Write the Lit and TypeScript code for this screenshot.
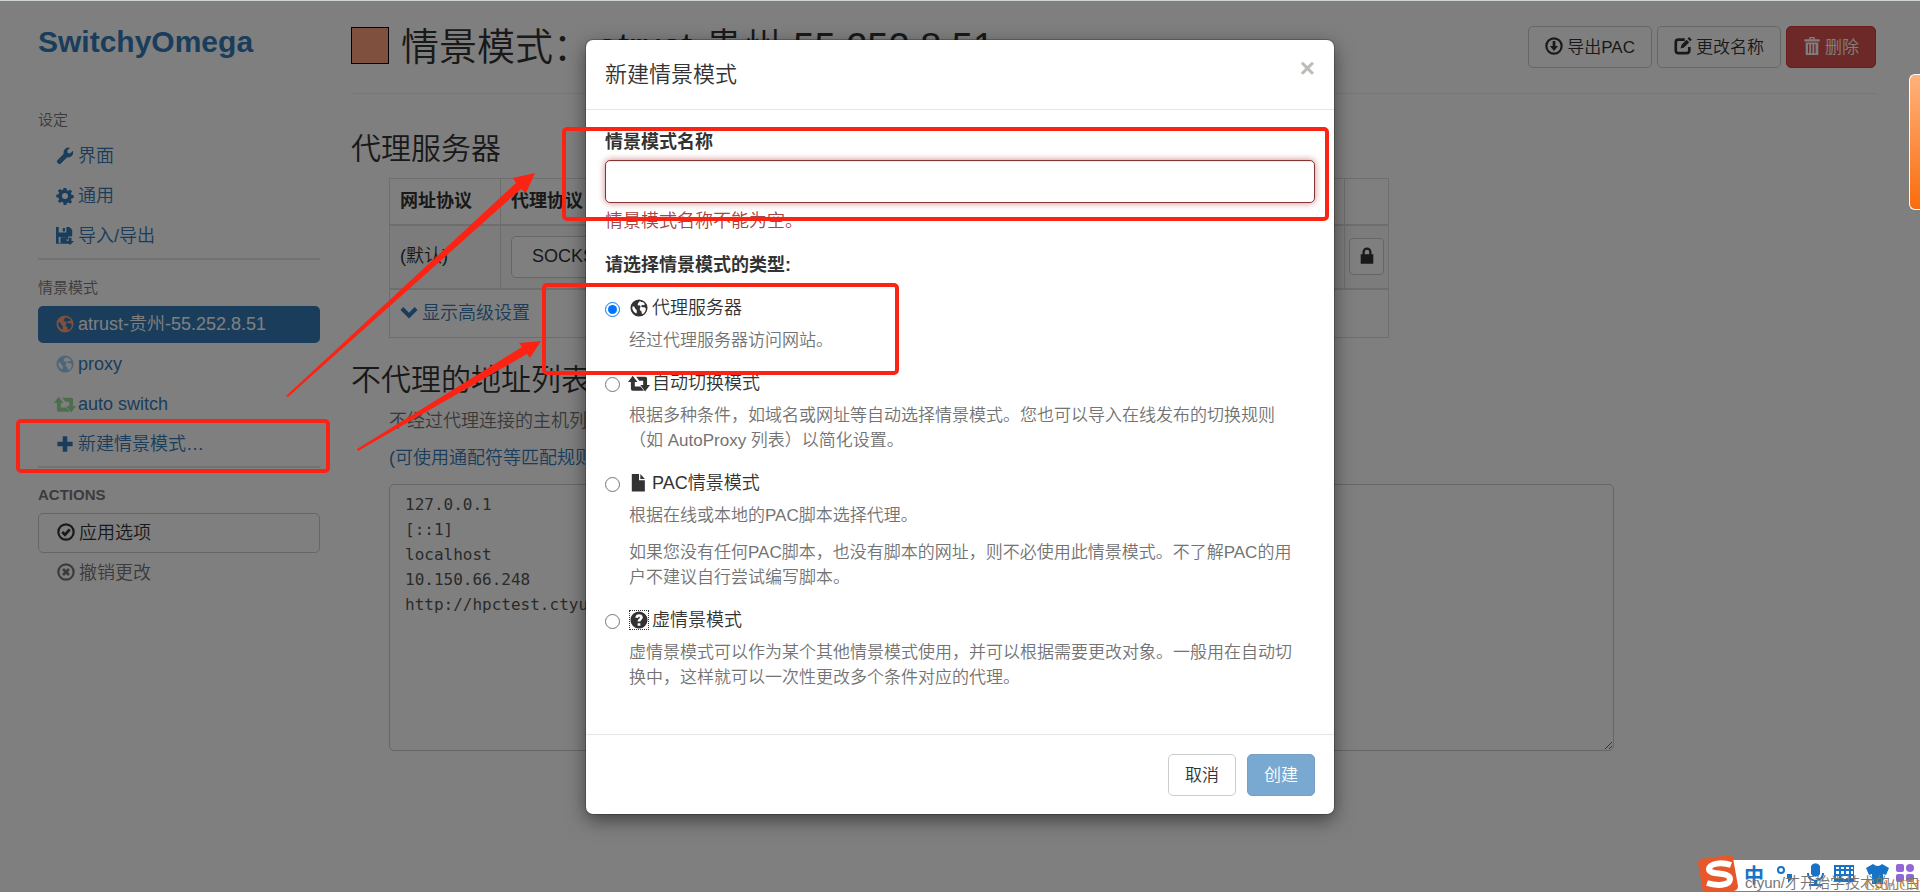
import { LitElement, html, css, svg } from "lit";
import { customElement, state } from "lit/decorators.js";

const glyphs: Record<string, unknown> = {
  wrench: svg`<path d="M18.700 4.200 15.600 7.200 13 6.600 12.500 4 15.500 1A5.400 5.400 0 0 0 8.600 7.600L1.600 14.600a2 2 0 0 0 0 2.800l1 1a2 2 0 0 0 2.800 0L12.400 11.400A5.400 5.400 0 0 0 18.700 4.200z"/>`,
  cog: svg`<path fill-rule="evenodd" d="M8.500 1h3l.5 2.500 1.700.7 2.100-1.400 2.100 2.100-1.400 2.100.7 1.700 2.500.5v3l-2.500.5-.7 1.700 1.400 2.100-2.100 2.100-2.100-1.400-1.700.7-.5 2.500h-3L8 17.200l-1.700-.7-2.100 1.400-2.100-2.100 1.400-2.100L2.800 12 .3 11.500v-3L2.800 8l.7-1.700-1.400-2.100 2.100-2.100 2.100 1.400L8 2.800zM10 6.700a3.300 3.300 0 1 0 0 6.600 3.300 3.300 0 0 0 0-6.600z"/>`,
  globe: svg`<path fill-rule="evenodd" d="M10 .5a9.500 9.500 0 1 0 0 19 9.500 9.500 0 0 0 0-19zM11 2.300l1.500.9 2.200.3 1.800 2-.8 1.500-2.200-.4-1.300 1.200 1.500 1.300 2.600.2 1.400 1.600-.8 3-2 2.600-1.600.2-.5-2.900-1.900-1.500.1-2.400 1-1.300-1.500-1.600-2 .2.3-2.200zM3 8l1.700.3 1 2.200 1.700 1.800.2 2.400-.6 1.300A7.600 7.600 0 0 1 2.500 10z"/>`,
  retweet: svg`<path d="M4.500 2.500 9 8.500H6.500v4.300H12l3.200 4H4.500A1.700 1.700 0 0 1 2.800 15V8.500H0zM7.800 3.500h8.700a1.700 1.700 0 0 1 1.700 1.700v6.300H21l-4.700 6-4.500-6h2.700V7.300h-3.700z"/>`,
  plus: svg`<path d="M7.500 1.500h5v6h6v5h-6v6h-5v-6h-6v-5h6z"/>`,
  ok: svg`<path fill="none" stroke="currentColor" stroke-width="2.400" d="M10 1.500a8.500 8.500 0 1 0 0 17 8.500 8.500 0 0 0 0-17z"/><path fill="none" stroke="currentColor" stroke-width="3" d="m5.800 10 3.100 3 5.300-6"/>`,
  remove: svg`<path fill="none" stroke="currentColor" stroke-width="2.400" d="M10 1.500a8.500 8.500 0 1 0 0 17 8.500 8.500 0 0 0 0-17z"/><path fill="none" stroke="currentColor" stroke-width="3" d="m6.700 6.700 6.600 6.600m0-6.600-6.600 6.600"/>`,
  down: svg`<path d="m3.700 4.500 6.300 6.300 6.300-6.300L19.500 7.700 10 17.200.5 7.700z"/>`,
  download: svg`<path fill="none" stroke="currentColor" stroke-width="2.400" d="M10 1.500a8.500 8.500 0 1 0 0 17 8.500 8.500 0 0 0 0-17z"/><path d="M8.500 4.500h3V10h3L10 15.500 5.500 10h3z"/>`,
  edit: svg`<path fill="none" stroke="currentColor" stroke-width="3" d="M12 3H5a3 3 0 0 0-3 3v9a3 3 0 0 0 3 3h9a3 3 0 0 0 3-3v-4"/><path d="m16.800 0 3 3L18 4.800l-3-3zM14 3l2.900 2.900-5.700 5.800-4 1.200 1.200-4.200z"/>`,
  trash: svg`<path fill-rule="evenodd" d="M7 0h6v2.500h5.500V5h-17V2.500H7zm1.500 1.300v1.200h3V1.300zM3 6.200h14V20H3zM5.500 8v10H7V8zm3.500 0v10h1.500V8zm3.500 0v10H14V8z"/>`,
  lock: svg`<path fill-rule="evenodd" d="M5 8V5.500a5 5 0 0 1 10 0V8h2v10.500H3V8zm2.500 0h5V5.500a2.500 2.500 0 0 0-5 0z"/>`,
  file: svg`<path d="M2 0h8v7h6.500v12.500H2zM11.500 0l5 5.500h-5z"/>`,
  question: svg`<path fill-rule="evenodd" d="M10 .5a9.500 9.500 0 1 0 0 19 9.500 9.500 0 0 0 0-19zM6 7.500C6 5 7.700 3.700 10 3.700S14.200 5 14.200 7.200c0 2.500-2.700 2.800-2.700 4.600h-3c0-3 2.500-3 2.500-4.500 0-1.500-2-1.400-2 .5zM8.500 13.500h3v2.800h-3z"/>`,
  save: svg`<path fill-rule="evenodd" d="M0 0h3v6h8.500V0H15l3 3v7.500h-4.500V14H11l4 4.500H0zM7.500 1H10v4H7.500zM3 11v7h2v-6.500h6V11z"/><path d="M14 12h3.200v3.500H20L15.600 20l-4.400-4.500H14z"/>`,
};

const icon = (name: string, tone = "") =>
  html`<svg class="icon ${tone}" viewBox=${name === "retweet" ? "0 1 21 17" : "0 0 20 20"} aria-hidden="true">${glyphs[name]}</svg>`;

interface ProfileType {
  id: string;
  icon: string;
  tone: string;
  title: string;
  help: string[];
}

const profileTypes: ProfileType[] = [
  { id: "fixed", icon: "globe", tone: "", title: "代理服务器", help: ["经过代理服务器访问网站。"] },
  {
    id: "switch",
    icon: "retweet",
    tone: "wide",
    title: "自动切换模式",
    help: ["根据多种条件\uFF0C如域名或网址等自动选择情景模式。您也可以导入在线发布的切换规则\uFF08如 AutoProxy 列表\uFF09以简化设置。"],
  },
  {
    id: "pac",
    icon: "file",
    tone: "",
    title: "PAC情景模式",
    help: [
      "根据在线或本地的PAC脚本选择代理。",
      "如果您没有任何PAC脚本\uFF0C也没有脚本的网址\uFF0C则不必使用此情景模式。不了解PAC的用户不建议自行尝试编写脚本。",
    ],
  },
  {
    id: "virtual",
    icon: "question",
    tone: "dotted",
    title: "虚情景模式",
    help: ["虚情景模式可以作为某个其他情景模式使用\uFF0C并可以根据需要更改对象。一般用在自动切换中\uFF0C这样就可以一次性更改多个条件对应的代理。"],
  },
];

const bypassList = "127.0.0.1\n[::1]\nlocalhost\n10.150.66.248\nhttp://hpctest.ctyun";

@customElement("app-root")
export class AppRoot extends LitElement {
  static styles = css`
    :host {
      display: block;
      position: relative;
      min-height: 100vh;
      overflow: hidden;
      background: #fff;
      color: #333;
      font: 350 18px/25px "Liberation Sans", "Noto Sans CJK SC", sans-serif;
    }
    * { box-sizing: border-box; }
    h1, h2, h3, p, ul { margin: 0; padding: 0; font-weight: inherit; }
    button, input, select, textarea { font: inherit; color: inherit; margin: 0; }
    a { color: #337ab7; text-decoration: none; }
    .icon { width: 18px; height: 18px; flex: none; fill: currentColor; margin-bottom: 2px; }
    .icon.wide { width: 22px; margin-left: -2px; margin-right: -2px; }
    .orange { color: #ffa07a; }
    .sky { color: #99ccee; }
    .green { color: #99dd99; }

    .page { display: flex; gap: 31px; padding: 26px 44px 0 38px; }
    .side { flex: 0 0 282px; }
    .brand { display: block; font-size: 30px; line-height: 32px; font-weight: 700; margin-bottom: 51px; }
    .caption { color: #777; font-size: 15px; line-height: 22px; margin-bottom: 7px; }
    .caption.strong { font-weight: 700; }
    .nav { list-style: none; display: grid; gap: 3px; }
    .nav a { display: flex; align-items: center; gap: 4px; height: 37px; padding: 0 18px; border-radius: 5px; }
    .nav .active { background: #337ab7; color: #fff; }
    .rule { border-top: 2px solid #e5e5e5; margin: 3px 0 17px; }
    .rule.last { margin-bottom: 16px; }
    .action { display: flex; align-items: center; gap: 4px; width: 100%; height: 40px; padding: 0 18px; border: 1px solid transparent; background: none; border-radius: 5px; text-align: left; color: #777; }
    .action.apply { border-color: #ccc; color: #333; }

    .main { flex: 1; min-width: 0; }
    .head { display: flex; align-items: center; height: 68px; padding-bottom: 25px; border-bottom: 1px solid #eee; }
    .swatch { width: 38px; height: 37px; padding: 0; margin: 0 12px 4px 0; border: 1px solid #000; background: #ffa07a; }
    .head h1 { display: flex; gap: 6px; flex: 1; font-size: 38px; line-height: 42px; white-space: nowrap; }
    .tools { display: flex; gap: 5px; }
    .btn { display: inline-flex; align-items: center; justify-content: center; gap: 4px; height: 42px; padding: 0 16px; border: 1px solid #ccc; border-radius: 5px; background: #fff; font-size: 17px; }
    .btn.danger { background: #d9534f; border-color: #d43f3a; color: #fff; }
    .btn.primary { background: #337ab7; border-color: #2e6da4; color: #fff; opacity: .65; }
    .main h2 { font-size: 30px; line-height: 34px; margin: 38px 0 12px; }
    .main h2.second { margin: 25px 0 12px; }
    .indent { padding-left: 38px; }
    table { width: 100%; max-width: 1000px; border-collapse: collapse; table-layout: fixed; }
    td, th { border: 1px solid #ddd; padding: 0 10px; text-align: left; }
    th { height: 46px; font-weight: 700; }
    .c1 { width: 111px; }
    .c4 { width: 44px; }
    .server td { height: 64px; background: #f9f9f9; border-top: 2px solid #ddd; border-bottom: 2px solid #ddd; }
    .server .lockcell { padding: 0 4px; }
    .scheme { appearance: none; width: 120px; height: 42px; padding: 0 20px; border: 1px solid #ccc; border-radius: 5px; background: #fff; }
    .auth { display: flex; align-items: center; justify-content: center; width: 35px; height: 37px; padding: 0; border: 1px solid #ccc; border-radius: 4px; background: #fff; }
    .more td { height: 49px; }
    .more a { display: flex; align-items: center; gap: 4px; }
    .hint { color: #737373; margin: 0 0 12px; }
    .bypass { display: block; width: 100%; max-width: 1225px; height: 267px; margin-top: 13px; padding: 7px 15px; border: 1px solid #ccc; border-radius: 5px; background: #fff; color: #555; font: 16px/25px "DejaVu Sans Mono", monospace; }

    .shade { position: absolute; inset: 0; background: rgba(0, 0, 0, .5); border-top: 1px solid #cfd6d2; z-index: 1; }
    .layer { position: absolute; inset: 0; padding-top: 40px; z-index: 2; }
    .modal { width: 748px; max-width: 96%; margin: 0 auto; background: #fff; border-radius: 7px; box-shadow: 0 6px 19px rgba(0, 0, 0, .5), 0 0 0 1px rgba(0, 0, 0, .2); }
    .mhead { display: flex; justify-content: space-between; align-items: flex-start; padding: 18px 19px; border-bottom: 1px solid #e5e5e5; }
    .mhead h2 { font-size: 22px; line-height: 33px; }
    .close { border: 0; background: none; padding: 0; color: #bbb; font-size: 26px; line-height: 20px; font-weight: 700; }
    .mbody { padding: 20px 19px 19px; }
    .label { display: block; font-weight: 700; }
    .name { display: block; width: 100%; height: 43px; margin: 5px 0 6px; padding: 0 15px; border: 1px solid #843534; border-radius: 5px; outline: 0; box-shadow: inset 0 1px 1px rgba(0, 0, 0, .08), 0 0 7px #ce8483; }
    .error { color: #a94442; margin-bottom: 19px; }
    .types { border: 0; padding: 0; margin: 0 0 25px; }
    .types legend { padding: 0; }
    .type { padding-top: 18px; }
    .type label { display: flex; align-items: center; gap: 4px; }
    .type input { width: 15px; height: 15px; margin: 2px 6px 0 0; accent-color: #0075ff; flex: none; }
    .type .dotted { outline: 1px dotted #333; }
    .type p { padding: 0 8px 0 24px; margin-top: 7px; color: #737373; font-size: 17px; }
    .type p + p { margin-top: 12px; }
    .mfoot { display: flex; justify-content: flex-end; gap: 11px; padding: 19px 19px 18px; border-top: 1px solid #e5e5e5; }

    .marks { position: absolute; left: 0; top: 0; width: 1920px; height: 892px; z-index: 3; pointer-events: none; }
    .tab { position: absolute; right: 0; top: 74px; width: 11px; height: 136px; border: 1px solid #fff; border-right: 0; border-radius: 6px 0 0 6px; background: linear-gradient(#ffb27c, #fa6c0c); z-index: 4; }
    .ime { position: absolute; right: 0; bottom: 0; width: 224px; height: 38px; z-index: 4; }
    .ime svg { display: block; width: 224px; height: 38px; }
    .ime .zh { font: 700 20px "Noto Sans CJK SC", sans-serif; }
    .credit { position: absolute; right: 0; bottom: 0; font-size: 15px; line-height: 18px; color: #777; white-space: nowrap; z-index: 5; }
    .site { position: absolute; right: 0; bottom: 0; font: 15px/14px "Liberation Serif", serif; color: #c98a35; z-index: 5; }
  `;

  @state() private selected = "fixed";

  render() {
    return html`
      <div class="page">
        <nav class="side">
          <a class="brand" href="#">SwitchyOmega</a>
          <div class="caption">设定</div>
          <ul class="nav">
            <li><a href="#ui">${icon("wrench")}界面</a></li>
            <li><a href="#general">${icon("cog")}通用</a></li>
            <li><a href="#io">${icon("save")}导入/导出</a></li>
          </ul>
          <div class="rule"></div>
          <div class="caption">情景模式</div>
          <ul class="nav">
            <li><a class="active" href="#atrust">${icon("globe", "orange")}atrust-贵州-55.252.8.51</a></li>
            <li><a href="#proxy">${icon("globe", "sky")}proxy</a></li>
            <li><a href="#auto">${icon("retweet", "wide green")}auto switch</a></li>
            <li><a href="#new">${icon("plus")}新建情景模式…</a></li>
          </ul>
          <div class="rule last"></div>
          <div class="caption strong">ACTIONS</div>
          <button class="action apply">${icon("ok")}应用选项</button>
          <button class="action">${icon("remove")}撤销更改</button>
        </nav>
        <main class="main">
          <header class="head">
            <button class="swatch" aria-label="颜色"></button>
            <h1><span>情景模式\uFF1A</span><span>atrust-贵州-55.252.8.51</span></h1>
            <div class="tools">
              <button class="btn">${icon("download")}导出PAC</button>
              <button class="btn">${icon("edit")}更改名称</button>
              <button class="btn danger">${icon("trash")}删除</button>
            </div>
          </header>
          <h2>代理服务器</h2>
          <div class="indent">
            <table>
              <thead>
                <tr><th class="c1">网址协议</th><th>代理协议</th><th class="c4"></th></tr>
              </thead>
              <tbody>
                <tr class="server">
                  <td>(默认)</td>
                  <td><select class="scheme" aria-label="代理协议"><option>SOCKS5</option></select></td>
                  <td class="lockcell"><button class="auth" aria-label="代理登录">${icon("lock")}</button></td>
                </tr>
                <tr class="more"><td colspan="3"><a href="#advanced">${icon("down")}显示高级设置</a></td></tr>
              </tbody>
            </table>
          </div>
          <h2 class="second">不代理的地址列表</h2>
          <div class="indent">
            <p class="hint">不经过代理连接的主机列表</p>
            <p><a href="#rules">(可使用通配符等匹配规则)</a></p>
            <textarea class="bypass" aria-label="不代理的地址列表" .value=${bypassList}></textarea>
          </div>
        </main>
      </div>

      <div class="shade"></div>
      <div class="layer">
        <form class="modal" role="dialog" aria-labelledby="title" @submit=${(e: Event) => e.preventDefault()}>
          <header class="mhead">
            <h2 id="title">新建情景模式</h2>
            <button type="button" class="close" aria-label="关闭">×</button>
          </header>
          <div class="mbody">
            <label class="label" for="name">情景模式名称</label>
            <input class="name" id="name" type="text" />
            <p class="error">情景模式名称不能为空。</p>
            <fieldset class="types">
              <legend class="label">请选择情景模式的类型:</legend>
              ${profileTypes.map(
                (t) => html`<div class="type">
                  <label>
                    <input type="radio" name="type" .checked=${this.selected === t.id} @change=${() => (this.selected = t.id)} />
                    ${icon(t.icon, t.tone)}${t.title}
                  </label>
                  ${t.help.map((line) => html`<p>${line}</p>`)}
                </div>`
              )}
            </fieldset>
          </div>
          <footer class="mfoot">
            <button type="button" class="btn">取消</button>
            <button class="btn primary" disabled>创建</button>
          </footer>
        </form>
      </div>

      <svg class="marks" viewBox="0 0 1920 892" aria-hidden="true">
        <g fill="none" stroke="#fb2414" stroke-width="4">
          <rect x="564" y="129" width="763" height="90" rx="3" />
          <rect x="544" y="285" width="353" height="88" rx="3" />
          <rect x="18" y="421" width="310" height="50" rx="3" />
        </g>
        <g fill="#fb2414">
          <path d="M286 396 516 183 513 178 535 173 526 193 521 189 288 397z" />
          <path d="M357 449 522 347 519 343 541 341 530 358 527 354 358 451z" />
        </g>
      </svg>
      <div class="tab"></div>
      <div class="ime">
        <svg viewBox="0 0 224 38" aria-hidden="true">
          <path fill="#fff" d="M36 6h188v31H36z" />
          <path fill="#e8572a" d="M5 5 33 1q4 0 4 3l5 28q0 4-4 5l-27 4q-3 0-4-3L2 9q0-3 3-4z" />
          <path fill="none" stroke="#fff" stroke-width="6" d="M35 11C26 8 14 9 13 15c0 7 21 2 21 10 0 7-14 7-23 4" />
          <g fill="#1773c8" transform="translate(0 3)">
            <text class="zh" x="48" y="26">中</text>
            <circle cx="85" cy="13" r="3" fill="none" stroke="#1773c8" stroke-width="2" />
            <path d="M91 17h5v5l-4 4v-5h-1zM115 9a5 5 0 0 1 9 0v8a5 5 0 0 1-9 0zM111 16h2c0 9 13 9 13 0h2c0 5-3 8-7 8v3h5v2h-13v-2h5v-3c-4 0-7-3-7-8z" />
            <path fill-rule="evenodd" d="M138 8h20v17h-20zm2 2v2h3v-2zm5 0v2h3v-2zm5 0v2h3v-2zm5 0v2h2v-2zm-15 4v3h3v-3zm5 0v3h3v-3zm5 0v3h3v-3zm5 0v3h2v-3zm-15 5v3h3v-3zm5 0v3h8v-3zm10 0v3h2v-3z" />
            <path d="M170 11 177 7q5 4 9 0l7 4-3 7-3-1v10h-11V17l-3 1z" />
          </g>
          <g fill="#9168d6" transform="translate(-2 1)">
            <rect x="202" y="9" width="8" height="8" rx="2" /><circle cx="216" cy="13" r="4" />
            <rect x="202" y="19" width="8" height="8" rx="2" /><rect x="212" y="19" width="8" height="8" rx="2" />
          </g>
        </svg>
      </div>
      <div class="credit">ctyun/才开始学技术的小白</div>
      <div class="site">Csdn.CN</div>
    `;
  }
}
